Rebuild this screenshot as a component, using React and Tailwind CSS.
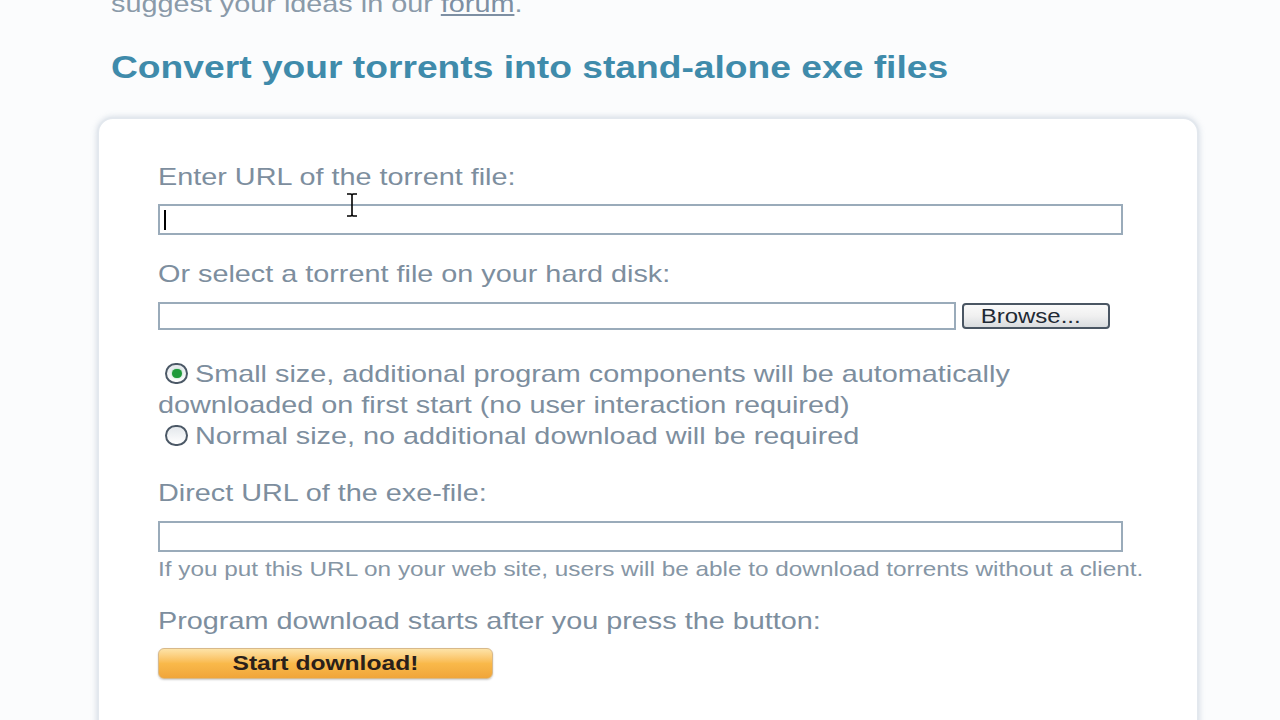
import React from 'react';

// The reference screenshot is stretched sideways, so text runs are widened with scale-x.
function Wide({ children, center = false }) {
  return (
    <span className={`inline-block whitespace-nowrap scale-x-[1.2] ${center ? 'origin-center' : 'origin-left'}`}>
      {children}
    </span>
  );
}

function Radio({ checked }) {
  return (
    <span className="flex shrink-0 items-center justify-center w-[23px] h-[21px] rounded-full border-2 border-[#4b5866] bg-gradient-to-b from-[#e4e8ec] to-[#ffffff] mr-[7px]">
      {checked && <span className="w-[10px] h-[9px] rounded-full bg-[#1f9a3a] shadow-[0_0_2px_#7fd08f]"></span>}
    </span>
  );
}

export default function App() {
  return (
    <div className="w-[1280px] h-[720px] overflow-hidden bg-[#fbfcfd] font-['Liberation_Sans',Arial,sans-serif] relative">
      <div className="pl-[111px] mt-[-10px] text-[24px] leading-[28px] text-[#8a9aa9]">
        <Wide>suggest your ideas in our <span className="underline text-[#7d8fa3]">forum</span>.</Wide>
      </div>

      <h1 className="pl-[111px] mt-[32px] text-[31px] leading-[36px] font-bold text-[#3f8bab]">
        <Wide>Convert your torrents into stand-alone exe files</Wide>
      </h1>

      <div className="ml-[97px] mt-[31px] w-[1102px] h-[640px] bg-white rounded-[16px] border-2 border-[#e3e8ee] shadow-[0_0_6px_rgba(160,175,195,0.45)] pl-[59px] pt-[43px]">
        <div className="text-[#7d8e9e] text-[24px] leading-[30px]">
          <Wide>Enter URL of the torrent file:</Wide>
        </div>
        <div className="mt-[12px] w-[965px] h-[31px] border-2 border-[#9aabba] bg-white flex items-center pl-[4px]">
          <span className="w-[2px] h-[20px] bg-black"></span>
        </div>

        <div className="mt-[24px] text-[#7d8e9e] text-[24px] leading-[30px]">
          <Wide>Or select a torrent file on your hard disk:</Wide>
        </div>
        <div className="mt-[13px] flex items-center">
          <div className="w-[798px] h-[28px] border-2 border-[#9aabba] bg-white"></div>
          <div className="ml-[6px] w-[148px] h-[26px] rounded-[4px] border-2 border-[#4a5663] bg-gradient-to-b from-[#fafafa] via-[#f0f0f0] to-[#d9dcdf] flex items-center justify-center pr-[10px] text-[20px] text-[#1f2a35]">
            <Wide center>Browse...</Wide>
          </div>
        </div>

        <div className="mt-[28px] text-[#7d8e9e] text-[24px] leading-[31px]">
          <div className="pl-[7px] flex items-center"><Radio checked /><Wide>Small size, additional program components will be automatically</Wide></div>
          <div><Wide>downloaded on first start (no user interaction required)</Wide></div>
          <div className="pl-[7px] flex items-center"><Radio /><Wide>Normal size, no additional download will be required</Wide></div>
        </div>

        <div className="mt-[27px] text-[#7d8e9e] text-[24px] leading-[30px]">
          <Wide>Direct URL of the exe-file:</Wide>
        </div>
        <div className="mt-[13px] w-[965px] h-[31px] border-2 border-[#9aabba] bg-white"></div>
        <div className="mt-[5px] text-[20.3px] leading-[24px] text-[#8696a5]">
          <Wide>If you put this URL on your web site, users will be able to download torrents without a client.</Wide>
        </div>

        <div className="mt-[25px] text-[#7d8e9e] text-[24px] leading-[30px]">
          <Wide>Program download starts after you press the button:</Wide>
        </div>
        <div className="mt-[12px] w-[335px] h-[31px] rounded-[6px] border border-[#d8b98a] bg-gradient-to-b from-[#fde3a7] via-[#f9b94a] to-[#f0a53a] flex items-center justify-center text-[20.5px] font-bold text-[#2a1f1a] shadow-[0_1px_2px_rgba(0,0,0,0.2)]">
          <Wide center>Start download!</Wide>
        </div>
      </div>

      <svg className="absolute left-[345px] top-[193px]" width="14" height="24" viewBox="0 0 14 24">
        <path d="M2 1h4l1 1 1-1h4M7 2v20M2 23h4l1-1 1 1h4" fill="none" stroke="#000" strokeWidth="1.6" />
      </svg>
    </div>
  );
}
